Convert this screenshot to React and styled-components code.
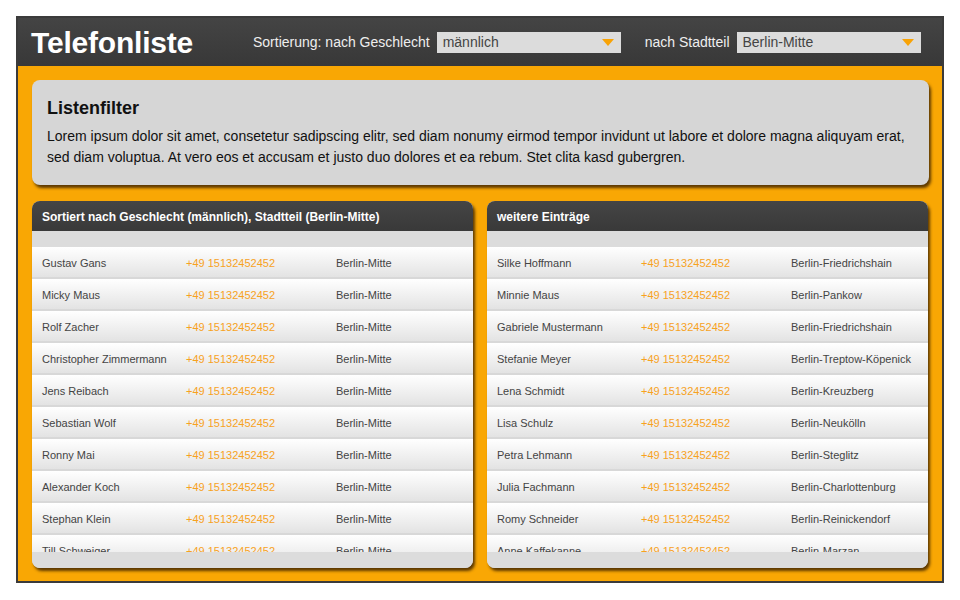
import React from 'react';
import styled, { createGlobalStyle } from 'styled-components';

const GlobalStyle = createGlobalStyle`
  html, body {
    margin: 0;
    padding: 0;
    background: #fff;
    font-family: "Liberation Sans", Arial, sans-serif;
  }
`;

const Frame = styled.div`
  margin: 16px;
  width: 924px;
  border: 2px solid #3b3b3b;
  box-sizing: content-box;
`;

const Header = styled.header`
  height: 48px;
  display: flex;
  align-items: center;
  padding: 0 13px;
  background: linear-gradient(#444444, #383838);
`;

const Title = styled.h1`
  margin: 0;
  font-size: 30px;
  font-weight: bold;
  color: #fff;
  letter-spacing: -0.2px;
  width: 222px;
  padding-top: 2px;
`;

const FilterLabel = styled.span`
  color: #eeeeee;
  font-size: 14px;
  margin-right: 7px;
  margin-left: ${(p) => p.$gap || 0}px;
`;

const Select = styled.div`
  width: 184px;
  height: 21px;
  box-sizing: border-box;
  background: #dcdcdc;
  display: flex;
  align-items: center;
  justify-content: space-between;
  padding: 0 7px 0 6px;
  font-size: 14px;
  color: #444;
`;

const Arrow = styled.span`
  width: 0;
  height: 0;
  border-left: 6px solid transparent;
  border-right: 6px solid transparent;
  border-top: 7px solid #f8a306;
  margin-top: 1px;
`;

const Main = styled.main`
  background: #f9a704;
  padding: 14px 13px 13px 14px;
  display: flex;
  flex-direction: column;
  gap: 16px;
`;

const InfoBox = styled.section`
  background: #d6d6d6;
  border-radius: 8px;
  box-shadow: 2px 3px 3px rgba(40, 20, 0, 0.75);
  padding: 18px 15px 18px 15px;
  height: 105px;
  box-sizing: border-box;
`;

const InfoTitle = styled.h2`
  margin: 0 0 7px;
  font-size: 18px;
  font-weight: bold;
  color: #111;
`;

const InfoText = styled.p`
  margin: 0;
  font-size: 14px;
  line-height: 21px;
  color: #111;
`;

const Columns = styled.div`
  display: grid;
  grid-template-columns: 441px 441px;
  gap: 14px;
`;

const Panel = styled.section`
  height: 367px;
  border-radius: 8px;
  box-shadow: 2px 3px 3px rgba(40, 20, 0, 0.75);
  display: flex;
  flex-direction: column;
  overflow: hidden;
  background: #dcdcdc;
`;

const PanelHead = styled.div`
  height: 30px;
  flex: none;
  display: flex;
  align-items: center;
  padding: 1px 10px 0;
  box-sizing: border-box;
  background: linear-gradient(#454545, #393939);
  color: #fff;
  font-size: 12px;
  font-weight: bold;
`;

const Band = styled.div`
  height: 16px;
  flex: none;
  background: #dcdcdc;
`;

const List = styled.div`
  height: 305px;
  flex: none;
  overflow: hidden;
`;

const Row = styled.div`
  height: 30px;
  box-sizing: border-box;
  padding: 2px 0 0 10px;
  display: grid;
  grid-template-columns: 144px 150px 1fr;
  align-items: center;
  background: linear-gradient(#ffffff, #e3e3e3);
  border-bottom: 2px solid #d8d8d8;
  font-size: 11px;
  color: #444;
  height: 32px;
`;

const Phone = styled.span`
  color: #f7a21e;
`;

const left = [
  'Gustav Gans',
  'Micky Maus',
  'Rolf Zacher',
  'Christopher Zimmermann',
  'Jens Reibach',
  'Sebastian Wolf',
  'Ronny Mai',
  'Alexander Koch',
  'Stephan Klein',
  'Till Schweiger',
].map((name) => [name, 'Berlin-Mitte']);

const right = [
  ['Silke Hoffmann', 'Berlin-Friedrichshain'],
  ['Minnie Maus', 'Berlin-Pankow'],
  ['Gabriele Mustermann', 'Berlin-Friedrichshain'],
  ['Stefanie Meyer', 'Berlin-Treptow-Köpenick'],
  ['Lena Schmidt', 'Berlin-Kreuzberg'],
  ['Lisa Schulz', 'Berlin-Neukölln'],
  ['Petra Lehmann', 'Berlin-Steglitz'],
  ['Julia Fachmann', 'Berlin-Charlottenburg'],
  ['Romy Schneider', 'Berlin-Reinickendorf'],
  ['Anne Kaffekanne', 'Berlin-Marzan'],
];

const ListPanel = ({ title, entries }) => (
  <Panel>
    <PanelHead>{title}</PanelHead>
    <Band />
    <List>
      {entries.map(([name, district]) => (
        <Row key={name}>
          <span>{name}</span>
          <Phone>+49 15132452452</Phone>
          <span>{district}</span>
        </Row>
      ))}
    </List>
    <Band />
  </Panel>
);

const App = () => (
  <>
    <GlobalStyle />
    <Frame>
      <Header>
        <Title>Telefonliste</Title>
        <FilterLabel>Sortierung: nach Geschlecht</FilterLabel>
        <Select>
          männlich
          <Arrow />
        </Select>
        <FilterLabel $gap={24}>nach Stadtteil</FilterLabel>
        <Select>
          Berlin-Mitte
          <Arrow />
        </Select>
      </Header>
      <Main>
        <InfoBox>
          <InfoTitle>Listenfilter</InfoTitle>
          <InfoText>
            Lorem ipsum dolor sit amet, consetetur sadipscing elitr, sed diam nonumy eirmod tempor
            invidunt ut labore et dolore magna aliquyam erat, sed diam voluptua. At vero eos et
            accusam et justo duo dolores et ea rebum. Stet clita kasd gubergren.
          </InfoText>
        </InfoBox>
        <Columns>
          <ListPanel
            title="Sortiert nach Geschlecht (männlich), Stadtteil (Berlin-Mitte)"
            entries={left}
          />
          <ListPanel title="weitere Einträge" entries={right} />
        </Columns>
      </Main>
    </Frame>
  </>
);

export default App;
